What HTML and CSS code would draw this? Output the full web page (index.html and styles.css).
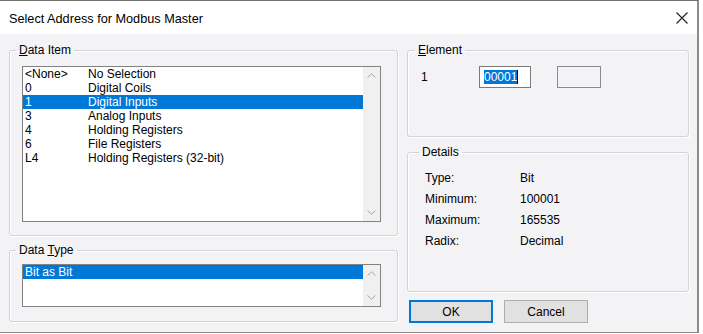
FILE: index.html
```html
<!DOCTYPE html>
<html>
<head>
<meta charset="utf-8">
<title>Select Address for Modbus Master</title>
<link rel="stylesheet" href="styles.css">
</head>
<body>
<div class="window">
  <div class="titlebar">
    <span class="title">Select Address for Modbus Master</span>
    <svg class="close" width="12" height="12" viewBox="0 0 12 12"><path d="M0.5 0.5L11.5 11.5M11.5 0.5L0.5 11.5" stroke="#1f1f1f" stroke-width="1.1" fill="none"/></svg>
  </div>
  <div class="client">
    <div class="col col-left">
      <fieldset class="group g-item">
        <legend><u>D</u>ata Item</legend>
        <div class="listbox lb-item">
          <ul class="items">
            <li><span class="c1">&lt;None&gt;</span><span>No Selection</span></li>
            <li><span class="c1">0</span><span>Digital Coils</span></li>
            <li class="selected"><span class="c1">1</span><span>Digital Inputs</span></li>
            <li><span class="c1">3</span><span>Analog Inputs</span></li>
            <li><span class="c1">4</span><span>Holding Registers</span></li>
            <li><span class="c1">6</span><span>File Registers</span></li>
            <li><span class="c1">L4</span><span>Holding Registers (32-bit)</span></li>
          </ul>
          <div class="vscroll">
            <span class="arrow"><svg width="9" height="5" viewBox="0 0 9 5"><path d="M0.5 4.5L4.5 0.8L8.5 4.5" stroke="#a6a6a6" stroke-width="1" fill="none"/></svg></span>
            <span class="arrow"><svg width="9" height="5" viewBox="0 0 9 5"><path d="M0.5 0.5L4.5 4.2L8.5 0.5" stroke="#a6a6a6" stroke-width="1" fill="none"/></svg></span>
          </div>
        </div>
      </fieldset>
      <fieldset class="group g-type">
        <legend>Data <u>T</u>ype</legend>
        <div class="listbox lb-type">
          <ul class="items">
            <li class="selected"><span>Bit as Bit</span></li>
          </ul>
          <div class="vscroll">
            <span class="arrow"><svg width="9" height="5" viewBox="0 0 9 5"><path d="M0.5 4.5L4.5 0.8L8.5 4.5" stroke="#a6a6a6" stroke-width="1" fill="none"/></svg></span>
            <span class="arrow"><svg width="9" height="5" viewBox="0 0 9 5"><path d="M0.5 0.5L4.5 4.2L8.5 0.5" stroke="#a6a6a6" stroke-width="1" fill="none"/></svg></span>
          </div>
        </div>
      </fieldset>
    </div>
    <div class="col col-right">
      <fieldset class="group g-element">
        <legend><u>E</u>lement</legend>
        <div class="element-row">
          <span class="el-label">1</span>
          <span class="edit focused"><span class="sel">00001</span><span class="caret"></span></span>
          <span class="edit disabled"></span>
        </div>
      </fieldset>
      <fieldset class="group g-details">
        <legend>Details</legend>
        <div class="detail-row"><span class="dl">Type:</span><span>Bit</span></div>
        <div class="detail-row"><span class="dl">Minimum:</span><span>100001</span></div>
        <div class="detail-row"><span class="dl">Maximum:</span><span>165535</span></div>
        <div class="detail-row"><span class="dl">Radix:</span><span>Decimal</span></div>
      </fieldset>
      <div class="buttons">
        <button class="btn default">OK</button>
        <button class="btn">Cancel</button>
      </div>
    </div>
  </div>
</div>
</body>
</html>
```
FILE: styles.css
```css
* { box-sizing: border-box; }
html, body { margin: 0; padding: 0; background: #ffffff; }
body {
  font-family: "Liberation Sans", Arial, sans-serif;
  font-size: 12px;
  color: #000;
}
.window {
  width: 699px;
  height: 333px;
  border-top: 1px solid #6e6e6e;
  border-right: 2px solid #8c8c8c;
  border-bottom: 1px solid #8c8c8c;
  display: flex;
  flex-direction: column;
  background: #f3f3f5;
}
.titlebar {
  height: 33px;
  flex: none;
  background: #ffffff;
  display: flex;
  align-items: center;
  justify-content: space-between;
  padding: 3px 9px 0 9px;
}
.title {
  font-size: 12.7px;
  color: #000;
}
.close { display: block; margin-top: -2px; }
.client {
  flex: 1;
  display: flex;
  gap: 9px;
  padding: 9px 8px 0 9px;
}
.col { display: flex; flex-direction: column; }
.col-left { width: 389px; }
.col-right { width: 282px; }
.group {
  margin: 0;
  min-width: 0;
  border: 1px solid #d3d3d6;
  border-radius: 3px;
  box-shadow: 1px 1px 0 #ffffff, inset 1px 1px 0 #ffffff;
}
.group legend {
  font-size: 12px;
  line-height: 14px;
  padding: 0 3px;
  margin-left: -6px;
}
.g-item { padding: 9px 16px 13px 12px; }
.g-type { padding: 7px 16px 14px 12px; margin-top: 7px; }
.listbox {
  display: flex;
  border: 1px solid #828282;
  background: #fff;
}
.lb-item { height: 156px; }
.lb-type { height: 43px; }
.items {
  flex: 1;
  list-style: none;
  margin: 0;
  padding: 0;
}
.items li {
  height: 14px;
  line-height: 14px;
  padding-left: 2px;
  display: flex;
  white-space: nowrap;
}
.items li.selected { background: #0078d7; color: #fff; }
.c1 { width: 63px; flex: none; }
.vscroll {
  width: 17px;
  flex: none;
  background: #f0f0f0;
  display: flex;
  flex-direction: column;
  justify-content: space-between;
}
.arrow {
  height: 17px;
  display: flex;
  align-items: center;
  justify-content: center;
}
.arrow svg { display: block; }
.g-element { padding: 9px 10px 48px 13px; }
.element-row { display: flex; align-items: center; height: 22px; }
.el-label { width: 58px; }
.edit {
  height: 22px;
  border: 1px solid #7a7a7a;
  display: flex;
  align-items: center;
  padding-left: 4px;
}
.edit.focused { width: 52px; background: #fff; }
.edit.disabled { width: 44px; margin-left: 26px; background: #f3f3f5; border-color: #8a8a8a; }
.sel { background: #0078d7; color: #fff; line-height: 14px; }
.caret { width: 1px; height: 14px; background: #000; }
.g-details { padding: 8px 10px 40px 17px; margin-top: 8px; }
.detail-row { display: flex; height: 21px; align-items: center; }
.dl { width: 95px; }
.buttons { display: flex; gap: 11px; margin-top: 8px; padding-left: 2px; }
.btn {
  width: 84px;
  height: 23px;
  background: #e1e1e1;
  border: 1px solid #adadad;
  font-family: inherit;
  font-size: 12px;
  color: #000;
  padding: 0;
}
.btn.default { border-color: #0078d7; box-shadow: inset 0 0 0 1px #0078d7; }
```
